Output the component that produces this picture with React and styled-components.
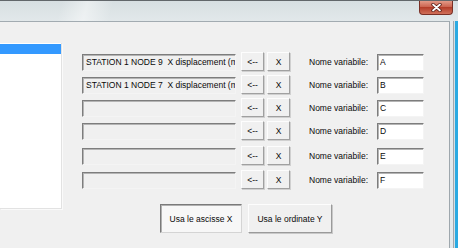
import React from "react";
import styled, { createGlobalStyle } from "styled-components";

const Global = createGlobalStyle`
  html, body {
    margin: 0;
    padding: 0;
    overflow: hidden;
  }
  body {
    font-family: "Liberation Sans", Arial, sans-serif;
    font-size: 8.5px;
    color: #0a0a0a;
  }
`;

const Window = styled.div`
  width: 458px;
  height: 248px;
  display: flex;
  flex-direction: column;
  background: #dfe6e9;
`;

const TitleBar = styled.div`
  height: 20px;
  flex: none;
  display: flex;
  justify-content: flex-end;
  border-top: 1px solid #62676b;
  background:
    linear-gradient(105deg, transparent 60px, rgba(255, 255, 255, 0.45) 85px, transparent 110px),
    linear-gradient(180deg, #d7dfe2, #e2e8ea);
`;

const CloseButton = styled.div`
  width: 34px;
  height: 14px;
  margin-right: 5px;
  box-sizing: border-box;
  display: flex;
  align-items: center;
  justify-content: center;
  border: 1px solid #7a3026;
  border-top: none;
  border-radius: 0 0 4px 4px;
  background: linear-gradient(180deg, #e39a88 0%, #cc6450 45%, #b43e2a 50%, #d0705a 100%);
`;

const Body = styled.div`
  flex: 1;
  display: flex;
`;

const Client = styled.div`
  width: 450px;
  box-sizing: border-box;
  border-top: 1px solid #a2abb1;
  border-right: 1px solid #9ea7ad;
  background: #f0f0f0;
  display: flex;
  align-items: flex-start;
`;

const Frame = styled.div`
  flex: 1;
  background: linear-gradient(90deg, #e3e9ec 0 3px, #a0a9af 3px 4px, #d6dee2 4px 5px, #2aaae2 5px 100%);
`;

const ListBox = styled.div`
  width: 62px;
  height: 166px;
  margin-top: 21px;
  box-sizing: border-box;
  background: #fff;
  border-right: 1px solid #e2e2e2;
  border-bottom: 1px solid #e2e2e2;
  box-shadow: 1px 1px 0 #fafafa;
  padding-top: 1px;
`;

const ListItem = styled.div`
  height: 10px;
  background: ${(p) => (p.$selected ? "#3399ff" : "transparent")};
`;

const Form = styled.div`
  margin-top: 30px;
  margin-left: 20px;
  display: flex;
  flex-direction: column;
`;

const Row = styled.div`
  height: 19px;
  margin-top: ${(p) => p.$space}px;
  display: flex;
  align-items: flex-end;
`;

const sunken = `
  box-sizing: border-box;
  height: 17px;
  border-style: solid;
  border-width: 1px;
  border-color: #7d7d7d #f4f4f4 #f4f4f4 #7d7d7d;
  box-shadow: inset 1px 1px 0 #b4b4b4;
  line-height: 15px;
  white-space: pre;
  overflow: hidden;
`;

const SourceField = styled.div`
  ${sunken}
  width: 154px;
  padding: 0 3px;
  background: #f0f0f0;
`;

const ButtonGroup = styled.div`
  display: flex;
  gap: 3px;
  margin-left: 5px;
`;

const SmallButton = styled.div`
  width: 23px;
  height: 19px;
  box-sizing: border-box;
  display: flex;
  align-items: center;
  justify-content: center;
  border: 1px solid;
  border-color: #fdfdfd #a0a0a0 #a0a0a0 #fdfdfd;
  box-shadow: 1px 1px 0 #d0d0d0;
  background: #f0f0f0;
  font-size: 8.5px;
`;

const Label = styled.div`
  width: 68px;
  margin-left: 19px;
  align-self: center;
  white-space: nowrap;
`;

const NameInput = styled.div`
  ${sunken}
  width: 47px;
  padding: 0 2px;
  background: #fff;
`;

const ActionBar = styled.div`
  display: flex;
  gap: 6px;
  margin-top: 15px;
  padding-left: 78px;
`;

const ActionButton = styled.div`
  width: ${(p) => p.$width}px;
  height: 29px;
  box-sizing: border-box;
  display: flex;
  align-items: center;
  justify-content: center;
  border: 1px solid;
  border-color: ${(p) =>
    p.$pressed ? "#7a7a7a #d4d4d4 #d4d4d4 #7a7a7a" : "#fdfdfd #9a9a9a #9a9a9a #fdfdfd"};
  box-shadow: ${(p) =>
    p.$pressed ? "inset 1px 1px 0 #b0b0b0" : "1px 1px 0 #c8c8c8"};
  background: ${(p) => (p.$pressed ? "#f7f7f7" : "#f0f0f0")};
`;

const rows = [
  { source: "STATION 1 NODE 9  X displacement (m)", name: "A", space: 0 },
  { source: "STATION 1 NODE 7  X displacement (m)", name: "B", space: 4 },
  { source: "", name: "C", space: 4 },
  { source: "", name: "D", space: 4 },
  { source: "", name: "E", space: 6 },
  { source: "", name: "F", space: 5 },
];

const CloseGlyph = () => (
  <svg width="11" height="9" viewBox="0 0 11 9">
    <path d="M2 1.5 L9 7.5 M9 1.5 L2 7.5" stroke="#5a1e16" strokeWidth="3.4" strokeLinecap="round" />
    <path d="M2 1.5 L9 7.5 M9 1.5 L2 7.5" stroke="#ffffff" strokeWidth="1.7" strokeLinecap="round" />
  </svg>
);

export default function App() {
  return (
    <>
      <Global />
      <Window>
        <TitleBar>
          <CloseButton>
            <CloseGlyph />
          </CloseButton>
        </TitleBar>
        <Body>
          <Client>
            <ListBox>
              <ListItem $selected />
            </ListBox>
            <Form>
              {rows.map((r) => (
                <Row key={r.name} $space={r.space}>
                  <SourceField>{r.source}</SourceField>
                  <ButtonGroup>
                    <SmallButton>&lt;--</SmallButton>
                    <SmallButton>X</SmallButton>
                  </ButtonGroup>
                  <Label>Nome variabile:</Label>
                  <NameInput>{r.name}</NameInput>
                </Row>
              ))}
              <ActionBar>
                <ActionButton $width={82} $pressed>
                  Usa le ascisse X
                </ActionButton>
                <ActionButton $width={84}>Usa le ordinate Y</ActionButton>
              </ActionBar>
            </Form>
          </Client>
          <Frame />
        </Body>
      </Window>
    </>
  );
}
